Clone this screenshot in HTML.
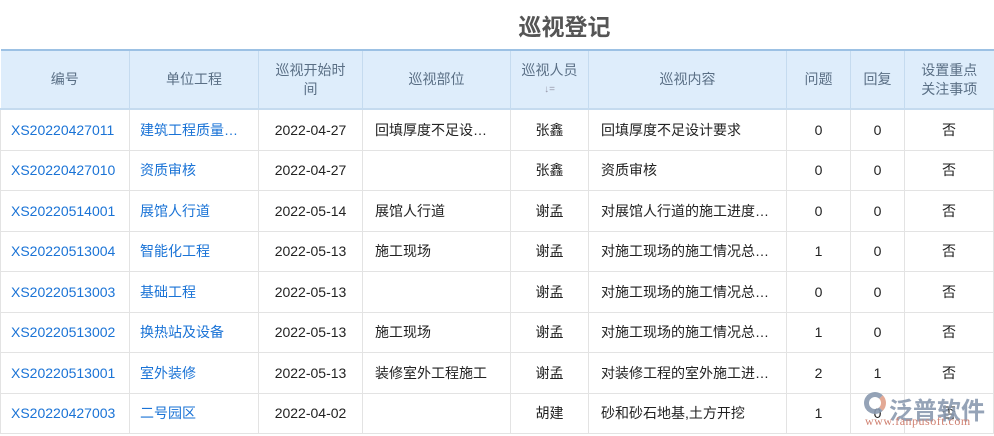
<!DOCTYPE html><html><head><meta charset="utf-8"><style>
body{margin:0;width:994px;height:436px;overflow:hidden;background:#fff;font-family:"Liberation Sans","Noto Sans CJK SC",sans-serif;position:relative}
h1{position:absolute;left:0;width:994px;margin:0;top:8px;text-align:center;font-size:23px;font-weight:bold;color:#555;padding-left:135px;box-sizing:border-box}
table{position:absolute;top:49px;left:0;border-collapse:collapse;table-layout:fixed;width:993px;font-size:14px}
th{background:#deedfb;color:#5a6f85;font-weight:normal;height:57px;border-left:1px solid #c5dbef;border-top:2px solid #9cc1e4;border-bottom:2px solid #c5dbef;line-height:19px;padding:0 12px;font-size:14px}
td{height:39.5px;border:1px solid #e3e3e3;border-top:none;text-align:center;color:#222;white-space:nowrap;overflow:hidden;text-overflow:ellipsis;padding:0 6px}
td.l{text-align:left}td.b{color:#1a73d6;text-align:left;padding-left:10px;padding-right:14px}
td.a{color:#1a73d6;text-align:left;padding-left:10px;padding-right:2px;text-overflow:clip}
td.c{padding-left:12px;padding-right:12px}
.s{font-size:10px;color:#99a;display:block}
.wm{position:absolute;left:889px;top:391px;color:#8a9ab0;font-size:24px;font-weight:bold;letter-spacing:0;opacity:.9;white-space:nowrap}
.wm2{position:absolute;left:865px;top:414px;color:#d08070;font-size:12px;font-family:"Liberation Serif",serif;letter-spacing:.5px;white-space:nowrap}
.ic{position:absolute;left:864px;top:392px;width:22px;height:22px;border-radius:50%;border:5px solid #8a9ab0;border-right-color:#e0a08a;box-sizing:border-box;opacity:.9}
</style></head><body>
<h1>巡视登记</h1>
<table>
<colgroup><col style="width:129px"><col style="width:129px"><col style="width:104px"><col style="width:148px"><col style="width:78px"><col style="width:198px"><col style="width:64px"><col style="width:54px"><col style="width:89px"></colgroup>
<tr><th style="border-left:none">编号</th><th>单位工程</th><th>巡视开始时间</th><th>巡视部位</th><th style="padding:0 4px">巡视人员<span class="s">↓=</span></th><th>巡视内容</th><th style="padding:0 4px">问题</th><th style="padding:0 4px">回复</th><th>设置重点关注事项</th></tr>
<tr><td class="a">XS20220427011</td><td class="b">建筑工程质量检查</td><td>2022-04-27</td><td class="l c">回填厚度不足设计要求</td><td>张鑫</td><td class="l c">回填厚度不足设计要求</td><td>0</td><td>0</td><td>否</td></tr>
<tr><td class="a">XS20220427010</td><td class="b">资质审核</td><td>2022-04-27</td><td class="l c"></td><td>张鑫</td><td class="l c">资质审核</td><td>0</td><td>0</td><td>否</td></tr>
<tr><td class="a">XS20220514001</td><td class="b">展馆人行道</td><td>2022-05-14</td><td class="l c">展馆人行道</td><td>谢孟</td><td class="l c">对展馆人行道的施工进度进行检查</td><td>0</td><td>0</td><td>否</td></tr>
<tr><td class="a">XS20220513004</td><td class="b">智能化工程</td><td>2022-05-13</td><td class="l c">施工现场</td><td>谢孟</td><td class="l c">对施工现场的施工情况总结检查</td><td>1</td><td>0</td><td>否</td></tr>
<tr><td class="a">XS20220513003</td><td class="b">基础工程</td><td>2022-05-13</td><td class="l c"></td><td>谢孟</td><td class="l c">对施工现场的施工情况总结检查</td><td>0</td><td>0</td><td>否</td></tr>
<tr><td class="a">XS20220513002</td><td class="b">换热站及设备</td><td>2022-05-13</td><td class="l c">施工现场</td><td>谢孟</td><td class="l c">对施工现场的施工情况总结检查</td><td>1</td><td>0</td><td>否</td></tr>
<tr><td class="a">XS20220513001</td><td class="b">室外装修</td><td>2022-05-13</td><td class="l c">装修室外工程施工</td><td>谢孟</td><td class="l c">对装修工程的室外施工进度检查</td><td>2</td><td>1</td><td>否</td></tr>
<tr><td class="a">XS20220427003</td><td class="b">二号园区</td><td>2022-04-02</td><td class="l c"></td><td>胡建</td><td class="l c">砂和砂石地基,土方开挖</td><td>1</td><td>0</td><td>否</td></tr>
</table>
<div class="ic"></div><div class="wm">泛普软件</div><div class="wm2">www.fanpusoft.com</div>
</body></html>
